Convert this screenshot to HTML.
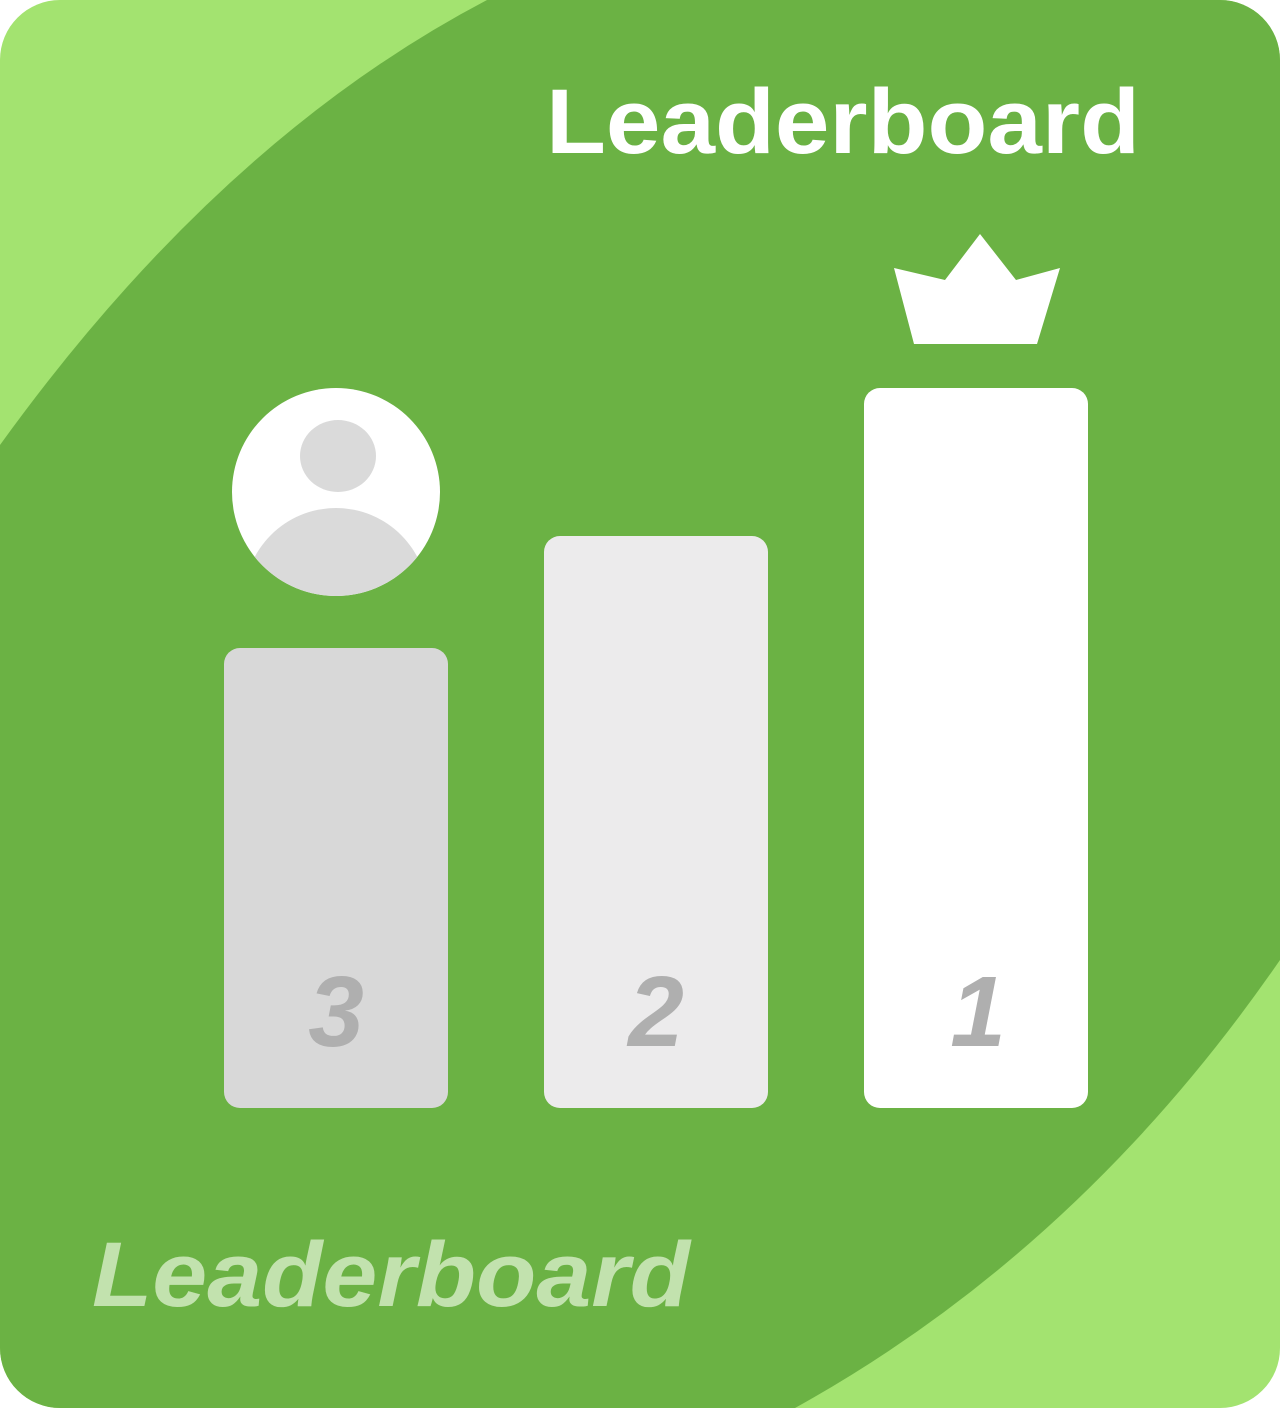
<!DOCTYPE html>
<html><head><style>
html,body{margin:0;padding:0;background:#fff;width:1280px;height:1408px;overflow:hidden}
</style></head><body>
<svg width="1280" height="1408" viewBox="0 0 1280 1408" xmlns="http://www.w3.org/2000/svg">
<defs>
<clipPath id="card"><rect x="0" y="0" width="1280" height="1408" rx="60" ry="60"/></clipPath>
<clipPath id="av"><circle cx="336" cy="492" r="104"/></clipPath>
</defs>
<g clip-path="url(#card)">
<rect width="1280" height="1408" fill="#a3e370"/>
<path d="M0 445 Q220 140 487 0 L1280 0 L1280 960 Q1080 1250 795 1408 L0 1408 Z" fill="#6bb244"/>
</g>
<text x="546" y="153" textLength="594" lengthAdjust="spacingAndGlyphs" font-family="Liberation Sans, sans-serif" font-weight="bold" font-size="92" fill="#fff">Leaderboard</text>
<text x="92" y="1306" textLength="598" lengthAdjust="spacingAndGlyphs" font-family="Liberation Sans, sans-serif" font-weight="bold" font-style="italic" font-size="92" fill="#c2e2ae">Leaderboard</text>
<polygon points="894,268 945,280 980,234 1016,280 1060,268 1037,344 914,344" fill="#fff"/>
<rect x="224" y="648" width="224" height="460" rx="16" fill="#d8d8d8"/>
<rect x="544" y="536" width="224" height="572" rx="16" fill="#ecebec"/>
<rect x="864" y="388" width="224" height="720" rx="16" fill="#fff"/>
<circle cx="336" cy="492" r="104" fill="#fff"/>
<g clip-path="url(#av)">
<ellipse cx="338" cy="456" rx="38" ry="36" fill="#dadada"/>
<circle cx="336" cy="600" r="92" fill="#dadada"/>
</g>
<g font-family="Liberation Sans, sans-serif" font-weight="bold" font-style="italic" font-size="100" fill="#afafaf" text-anchor="middle">
<text x="336" y="1046">3</text>
<text x="656" y="1046">2</text>
<text x="978" y="1046">1</text>
</g>
</svg>
</body></html>
